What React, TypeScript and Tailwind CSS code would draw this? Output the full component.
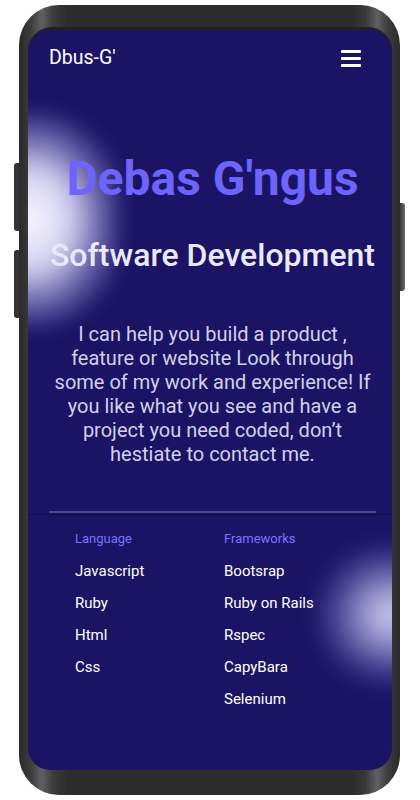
const languages = ["Javascript", "Ruby", "Html", "Css"];
const frameworks = ["Bootsrap", "Ruby on Rails", "Rspec", "CapyBara", "Selenium"];

export default function App() {
  return (
    <div className="w-[420px] h-[800px] bg-white pt-[5px] pl-[19px] font-['Roboto',sans-serif]">
      {/* phone body */}
      <div className="relative w-[381px] h-[790px] rounded-[40px] bg-[linear-gradient(to_right,#2a2a2a_0%,#3b3b3d_3%,#5f6064_6%,#3a3a3a_9%,#2d2c2c_13%,#2d2c2c_87%,#3a3a3a_91%,#5f6064_94%,#3b3b3d_97%,#2a2a2a_100%)] pt-[25px] pl-[9px]">
        {/* side buttons */}
        <div className="absolute left-[-5px] top-[158px] w-[5px] h-[68px] rounded-l-[3px] bg-[#343232]" />
        <div className="absolute left-[-5px] top-[245px] w-[5px] h-[68px] rounded-l-[3px] bg-[#343232]" />
        <div className="absolute right-[-5px] top-[198px] w-[5px] h-[88px] rounded-r-[3px] bg-[linear-gradient(to_right,#3a3838,#6b6b6b)]" />

        {/* screen bezel */}
        <div className="w-[364px] h-[742px] rounded-[24px] bg-[#232222] pt-[3px] pb-[3px] -mt-[3px]">
          <div className="relative w-[364px] h-[740px] rounded-[22px] overflow-hidden bg-[#1b1464]">
            {/* glows */}
            <div className="absolute left-[-85px] top-[85px] w-[175px] h-[210px] rounded-full bg-[radial-gradient(ellipse_at_center,rgba(250,250,255,1)_0%,rgba(228,226,252,0.92)_32%,rgba(150,145,220,0.45)_62%,rgba(27,20,100,0)_100%)] blur-[10px]" />
            <div className="absolute right-[-75px] top-[515px] w-[150px] h-[140px] rounded-full bg-[radial-gradient(ellipse_at_center,rgba(215,213,245,1)_0%,rgba(180,176,230,0.75)_30%,rgba(110,104,190,0.35)_60%,rgba(27,20,100,0)_100%)] blur-[10px]" />

            <div className="relative flex flex-col h-full">
              {/* header */}
              <div className="flex items-center justify-between pt-[16px] pl-[21px] pr-[31px]">
                <span className="text-[19.5px] leading-[24px] text-white">Dbus-G'</span>
                <div className="flex flex-col gap-[4px] w-[20px]">
                  <span className="block h-[3px] bg-white rounded-[1px]" />
                  <span className="block h-[3px] bg-white rounded-[1px]" />
                  <span className="block h-[3px] bg-white rounded-[1px]" />
                </div>
              </div>

              {/* hero */}
              <div className="flex flex-col pl-[5px] text-center">
                <h1 className="mt-[81px] text-[48px] leading-[56px] font-bold text-[#6c64fb]">
                  Debas G'ngus
                </h1>
                <h2 className="mt-[29px] text-[32px] leading-[38px] font-medium text-[#ebe9ff]">
                  Software Development
                </h2>
                <p className="mt-[48px] text-[20px] leading-[24px] text-[#d2d0ea]">
                  I can help you build a product ,<br />
                  feature or website Look through<br />
                  some of my work and experience! If<br />
                  you like what you see and have a<br />
                  project you need coded, don’t<br />
                  hestiate to contact me.
                </p>
              </div>

              <div className="mt-[45px] ml-[21px] mr-[16px] h-[2px] bg-[#4d4a85]" />

              {/* skills */}
              <div className="mt-[1px] border-t border-[#120e4c] pt-[8px] pl-[47px] grid grid-cols-[149px_1fr]">
                <div className="flex flex-col">
                  <span className="h-8 flex items-center text-[13px] text-[#7a72ff]">Language</span>
                  {languages.map((l) => (
                    <span key={l} className="h-8 flex items-center text-[15px] text-white">
                      {l}
                    </span>
                  ))}
                </div>
                <div className="flex flex-col">
                  <span className="h-8 flex items-center text-[13px] text-[#7a72ff]">Frameworks</span>
                  {frameworks.map((f) => (
                    <span key={f} className="h-8 flex items-center text-[15px] text-white">
                      {f}
                    </span>
                  ))}
                </div>
              </div>
            </div>
          </div>
        </div>
      </div>
    </div>
  );
}
